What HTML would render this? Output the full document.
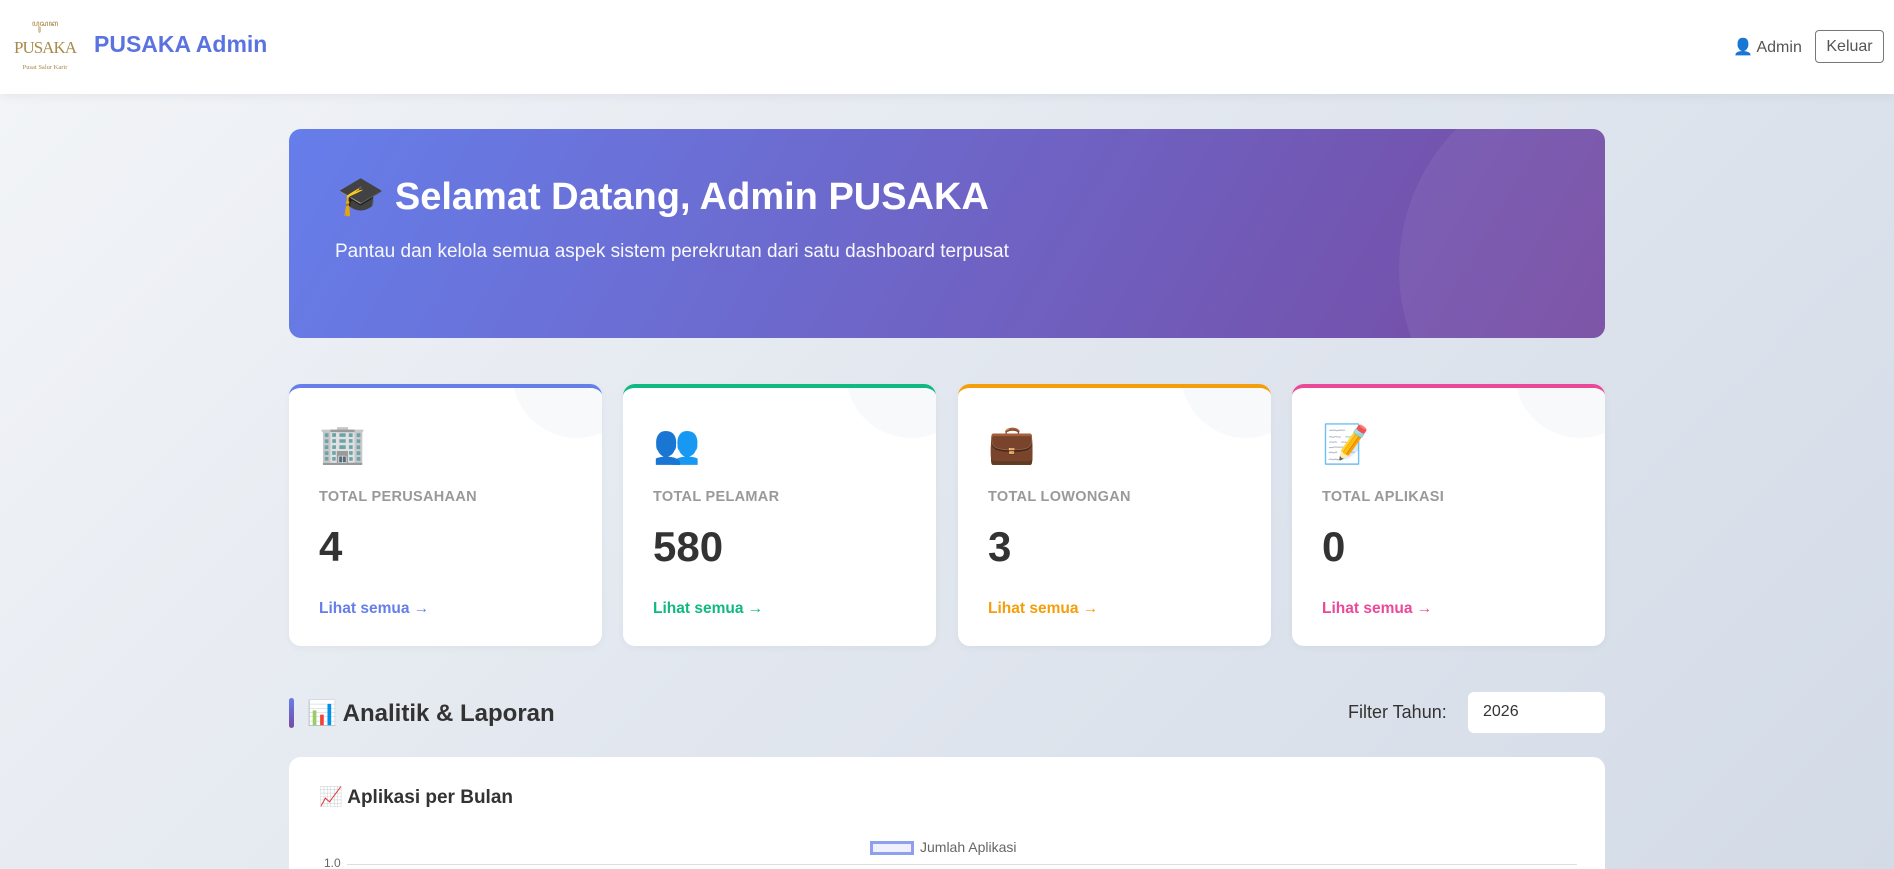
<!DOCTYPE html>
<html style="background:#e2e7ef"><head><meta charset="utf-8"><style>
*{box-sizing:border-box;margin:0;padding:0}
html,body{width:1894px;height:869px;overflow:hidden}
body{font-family:"Liberation Sans",sans-serif;background:linear-gradient(135deg,#f3f5f8 0%,#e2e7ef 50%,#d3dbe7 100%);position:relative}
.hdr{position:absolute;left:0;top:0;width:1894px;height:94px;background:#fff;box-shadow:0 2px 10px rgba(0,0,0,.06)}
.logo{position:absolute;left:12px;top:18px;width:66px;height:56px;text-align:center;color:#a88a4a;font-family:"Liberation Serif",serif}
.logo .t{font-size:8px}
.logo .b{font-size:17px;letter-spacing:-1px;margin-top:4px}
.logo .s{font-size:6.5px;margin-top:6px}
.ttl{position:absolute;left:94px;top:31px;font-size:23px;font-weight:bold;color:#5b73e0}
.usr{position:absolute;left:1733px;top:37px;font-size:16px;color:#555}
.kel{position:absolute;left:1815px;top:30px;width:69px;height:33px;border:1px solid #777;border-radius:4px;font-size:16px;color:#555;text-align:center;line-height:31px}
.hero{position:absolute;left:289px;top:129px;width:1316px;height:209px;border-radius:12px;background:linear-gradient(120deg,#667eea 0%,#764ba2 100%);overflow:hidden;color:#fff}
.hero .c{position:absolute;left:1110px;top:-60px;width:400px;height:400px;border-radius:50%;background:rgba(255,255,255,.06)}
.hero h1{position:absolute;left:48px;top:46px;font-size:38px;font-weight:bold;white-space:nowrap}
.hero p{position:absolute;left:46px;top:112px;font-size:19px;opacity:.95}
.card{position:absolute;top:384px;width:313px;height:262px;background:#fff;border-radius:12px;border-top:4px solid;overflow:hidden;box-shadow:0 2px 8px rgba(0,0,0,.04)}
.card .c{position:absolute;right:-40px;top:-80px;width:130px;height:130px;border-radius:50%;background:#f8f9fb}
.card .i{position:absolute;left:30px;top:35px;font-size:38px;line-height:44px}
.card .l{position:absolute;left:30px;top:101px;font-size:14.5px;font-weight:bold;color:#999;letter-spacing:.3px}
.card .n{position:absolute;left:30px;top:135px;font-size:42px;font-weight:bold;color:#333}
.card .a{position:absolute;left:30px;top:212px;font-size:15.5px;font-weight:bold}
.sec{position:absolute;left:289px;top:698px;width:5px;height:30px;background:linear-gradient(#667eea,#764ba2);border-radius:3px}
.sect{position:absolute;left:307px;top:699px;font-size:24px;font-weight:bold;color:#333}
.ft{position:absolute;left:1348px;top:702px;font-size:18px;color:#333}
.sel{position:absolute;left:1468px;top:692px;width:137px;height:41px;background:#fff;border-radius:6px;font-size:16px;color:#333;padding:11px 0 0 15px}
.ch{position:absolute;left:289px;top:757px;width:1316px;height:140px;background:#fff;border-radius:12px}
.ch h3{position:absolute;left:30px;top:28px;font-size:19px;font-weight:bold;color:#333}
.leg{position:absolute;left:581px;top:84px;width:44px;height:14px;border:3px solid #8f9ff0;background:#eef0fc}
.legt{position:absolute;left:631px;top:82px;font-size:14px;color:#666}
.y{position:absolute;left:35px;top:99px;font-size:12px;color:#666}
.gl{position:absolute;left:58px;top:107px;width:1230px;height:1px;background:#ddd}
</style></head><body>
<div class="hdr">
<div class="logo"><div class="t">ꦥꦸꦱꦏ</div><div class="b">PUSAKA</div><div class="s">Pusat Salur Karir</div></div>
<div class="ttl">PUSAKA Admin</div>
<div class="usr">👤 Admin</div>
<div class="kel">Keluar</div>
</div>
<div class="hero"><div class="c"></div><h1>🎓 Selamat Datang, Admin PUSAKA</h1><p>Pantau dan kelola semua aspek sistem perekrutan dari satu dashboard terpusat</p></div>
<div class="card" style="left:289px;border-color:#667eea"><div class="c"></div><div class="i">🏢</div><div class="l">TOTAL PERUSAHAAN</div><div class="n">4</div><div class="a" style="color:#667eea">Lihat semua →</div></div>
<div class="card" style="left:623px;border-color:#10b981"><div class="c"></div><div class="i">👥</div><div class="l">TOTAL PELAMAR</div><div class="n">580</div><div class="a" style="color:#10b981">Lihat semua →</div></div>
<div class="card" style="left:958px;border-color:#f59e0b"><div class="c"></div><div class="i">💼</div><div class="l">TOTAL LOWONGAN</div><div class="n">3</div><div class="a" style="color:#f59e0b">Lihat semua →</div></div>
<div class="card" style="left:1292px;border-color:#ec4899"><div class="c"></div><div class="i">📝</div><div class="l">TOTAL APLIKASI</div><div class="n">0</div><div class="a" style="color:#ec4899">Lihat semua →</div></div>
<div class="sec"></div><div class="sect">📊 Analitik &amp; Laporan</div>
<div class="ft">Filter Tahun:</div><div class="sel">2026</div>
<div class="ch"><h3>📈 Aplikasi per Bulan</h3><div class="leg"></div><div class="legt">Jumlah Aplikasi</div><div class="y">1.0</div><div class="gl"></div></div>
</body></html>
